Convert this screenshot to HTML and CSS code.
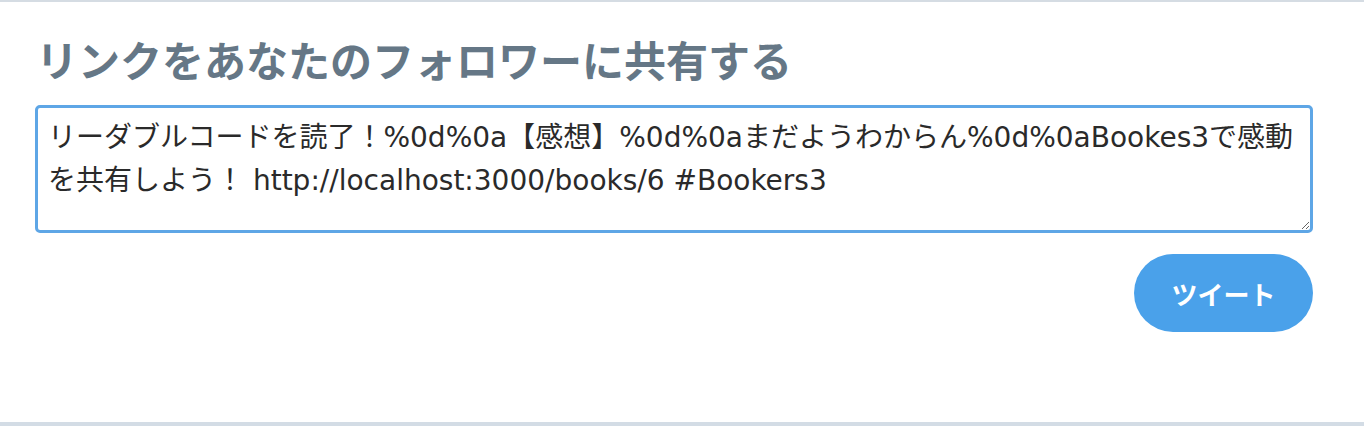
FILE: index.html
```html
<!DOCTYPE html>
<html lang="ja">
<head>
<meta charset="utf-8">
<title>シェア</title>
<link rel="stylesheet" href="styles.css">
</head>
<body>
<section class="share">
  <h2 class="share-title">リンクをあなたのフォロワーに共有する</h2>
  <textarea class="share-text">リーダブルコードを読了！%0d%0a【感想】%0d%0aまだようわからん%0d%0aBookes3で感動を共有しよう！ http://localhost:3000/books/6 #Bookers3</textarea>
  <div class="share-actions">
    <button class="tweet-btn" type="button">ツイート</button>
  </div>
</section>
</body>
</html>
```

FILE: styles.css
```css
html, body {
  margin: 0;
  padding: 0;
  background: #ffffff;
}

.share {
  border-top: 2px solid #d5dce3;
  border-bottom: 4px solid #d3dce5;
  padding: 32px 51px 90px 35px;
  display: flex;
  flex-direction: column;
  font-family: "Noto Sans CJK JP", "Noto Sans", sans-serif;
}

.share-title {
  margin: 0 0 21px 1px;
  height: 50px;
  font-size: 42px;
  line-height: 50px;
  font-weight: 700;
  color: #657786;
}

.share-text {
  box-sizing: border-box;
  width: 1278px;
  height: 128px;
  margin: 0;
  padding: 8px 10px;
  border: 3px solid #5ea6e6;
  border-radius: 5px;
  outline: none;
  font-family: "DejaVu Sans", "Noto Sans CJK JP", sans-serif;
  font-size: 28px;
  line-height: 43px;
  color: #2a2a2a;
  resize: vertical;
}

.share-actions {
  width: 1278px;
  display: flex;
  justify-content: flex-end;
  margin-top: 21px;
}

.tweet-btn {
  width: 179px;
  height: 78px;
  border: none;
  border-radius: 39px;
  background: #4aa1ea;
  color: #ffffff;
  font-family: "Noto Sans CJK JP", sans-serif;
  font-size: 26px;
  font-weight: 700;
  padding: 0;
  cursor: pointer;
}
```
